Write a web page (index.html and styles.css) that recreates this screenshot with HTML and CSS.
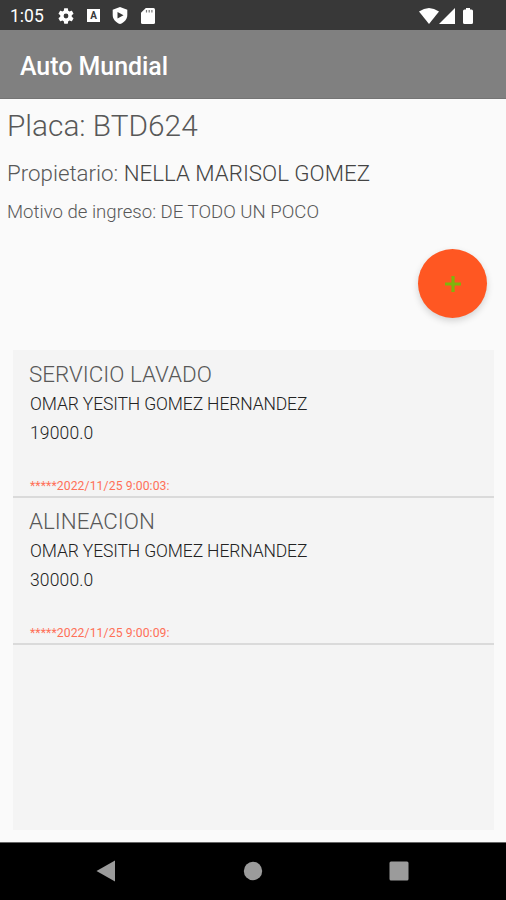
FILE: index.html
```html
<!DOCTYPE html>
<html lang="es">
<head>
    <meta charset="UTF-8">
    <meta name="viewport" content="width=device-width, initial-scale=1.0">
    <title>Auto Mundial</title>
    <link rel="stylesheet" href="styles.css">
</head>
<body>
    <div class="status-bar">
        <span class="clock">1:05</span>
        <svg class="icon-gear" viewBox="2 2 20 20" width="16" height="16"><path fill="#fff" d="M19.14 12.94c.04-.3.06-.61.06-.94 0-.32-.02-.64-.07-.94l2.03-1.58c.18-.14.23-.41.12-.61l-1.92-3.32c-.12-.22-.37-.29-.59-.22l-2.39.96c-.5-.38-1.03-.7-1.62-.94l-.36-2.54c-.04-.24-.24-.41-.48-.41h-3.84c-.24 0-.43.17-.47.41l-.36 2.54c-.59.24-1.13.57-1.62.94l-2.39-.96c-.22-.08-.47 0-.59.22L2.74 8.87c-.12.21-.08.47.12.61l2.03 1.58c-.05.3-.09.63-.09.94s.02.64.07.94l-2.03 1.58c-.18.14-.23.41-.12.61l1.92 3.32c.12.22.37.29.59.22l2.39-.96c.5.38 1.03.7 1.62.94l.36 2.54c.05.24.24.41.48.41h3.84c.24 0 .44-.17.47-.41l.36-2.54c.59-.24 1.13-.56 1.62-.94l2.39.96c.22.08.47 0 .59-.22l1.92-3.32c.12-.22.07-.47-.12-.61zM12 15a3 3 0 1 1 0-6 3 3 0 0 1 0 6z"/></svg>
        <span class="icon-keyboard">A</span>
        <svg class="icon-shield" viewBox="0 0 16 17" width="16" height="17"><path fill="#fff" d="M8 0l7.3 2.7v5.2c0 4.2-2.9 7.4-7.3 9.1-4.400-1.700-7.300-4.900-7.300-9.100V2.700z"/><path fill="#383838" d="M5.500 5.100l6 3.100-6 3.200z"/></svg>
        <svg class="icon-card" viewBox="0 0 14 16" width="14" height="16"><path fill="#fff" d="M4.800 0h7.700q1.500 0 1.500 1.500v13q0 1.500-1.500 1.500h-11Q0 16 0 14.500V4.800z"/><path stroke="#777" stroke-width="1.200" d="M5.500 2v2.500M8.200 2v2.500M10.900 2v2.500"/></svg>
        <svg class="icon-wifi" viewBox="0 0 20 16" width="20" height="16"><path fill="#fff" d="M0 3.600Q10-3.600 20 3.600L10 16z"/></svg>
        <svg class="icon-signal" viewBox="0 0 16 16" width="16" height="16"><path fill="#fff" d="M16 0v16H0z"/></svg>
        <svg class="icon-battery" viewBox="0 0 10 16" width="10" height="16"><path fill="#fff" d="M3 0h4v1.500h1.500Q10 1.500 10 3v11.500Q10 16 8.500 16h-7Q0 16 0 14.500V3q0-1.500 1.500-1.500H3z"/></svg>
    </div>

    <header class="app-bar">
        <h1>Auto Mundial</h1>
    </header>

    <main class="content">
        <div class="vehicle">
            <p class="plate">Placa: BTD624</p>
            <p class="owner">Propietario: <span>NELLA MARISOL GOMEZ</span></p>
            <p class="reason">Motivo de ingreso: DE TODO UN POCO</p>
        </div>

        <div class="actions">
            <button class="fab" aria-label="Agregar servicio">
                <svg viewBox="0 0 16 16" width="16" height="16"><path stroke="#7eb50c" stroke-width="3.200" d="M8 0v16M0 8h16"/></svg>
            </button>
        </div>

        <div class="services">
            <div class="service">
                <h2>SERVICIO LAVADO</h2>
                <p class="worker">OMAR YESITH GOMEZ HERNANDEZ</p>
                <p class="price">19000.0</p>
                <p class="date">*****2022/11/25 9:00:03:</p>
            </div>
            <div class="service">
                <h2>ALINEACION</h2>
                <p class="worker">OMAR YESITH GOMEZ HERNANDEZ</p>
                <p class="price">30000.0</p>
                <p class="date">*****2022/11/25 9:00:09:</p>
            </div>
        </div>
    </main>

    <nav class="nav-bar">
        <svg viewBox="0 0 20 22" width="20" height="22"><path fill="#9b9b9b" d="M19 .5v21L.5 11z"/></svg>
        <svg viewBox="0 0 20 20" width="20" height="20"><circle cx="10" cy="10" r="9.200" fill="#9b9b9b"/></svg>
        <svg viewBox="0 0 20 20" width="20" height="20"><rect x=".5" y=".5" width="19" height="19" rx="1.500" fill="#9b9b9b"/></svg>
    </nav>
</body>
</html>
```

FILE: styles.css
```css
* {
    box-sizing: border-box;
}

body {
    font-family: Roboto, sans-serif;
    background-color: #fafafa;
    margin: 0;
    height: 900px;
    display: flex;
    flex-direction: column;
    overflow: hidden;
}

h1, h2, p {
    margin: 0;
    font-weight: 300;
    white-space: nowrap;
}

.status-bar {
    height: 30px;
    flex: none;
    background-color: #383838;
    color: #fff;
    display: flex;
    align-items: center;
    padding: 1px 33px 0 10px;
}

.clock {
    width: 48px;
    font-size: 17.5px;
}

.icon-keyboard {
    width: 13px;
    height: 13px;
    margin-left: 13px;
    background-color: #fff;
    color: #383838;
    font-size: 10px;
    font-weight: 700;
    line-height: 13px;
    text-align: center;
}

.icon-shield {
    margin-left: 12px;
}

.icon-card {
    margin-left: 13px;
}

.icon-wifi {
    margin-left: auto;
}

.icon-battery {
    margin-left: 8px;
}

.app-bar {
    height: 69px;
    flex: none;
    background-color: #808080;
    display: flex;
    align-items: center;
    padding: 4px 20px 0;
    border-bottom: 1px solid #747474;
}

.app-bar h1 {
    color: #fff;
    font-size: 24.9px;
    font-weight: 500;
}

.content {
    flex: 1;
    padding: 7px 12px 12px 13px;
    display: flex;
    flex-direction: column;
}

.vehicle {
    margin-left: -6px;
    color: #585858;
}

.plate {
    font-size: 29.8px;
    line-height: 40px;
}

.owner {
    margin-top: 11px;
    font-size: 22.3px;
    line-height: 32px;
}

.owner span {
    color: #444;
}

.reason {
    margin-top: 10px;
    font-size: 18.6px;
    line-height: 26px;
}

.actions {
    display: flex;
    justify-content: flex-end;
    padding: 24px 7px 32px 0;
}

.fab {
    width: 69px;
    height: 69px;
    padding: 0;
    border: none;
    border-radius: 50%;
    background-color: #ff5722;
    box-shadow: 0 3px 7px rgba(0, 0, 0, 0.16);
    display: flex;
    justify-content: center;
    align-items: center;
}

.services {
    flex: 1;
    padding-top: 1px;
    background-color: #f4f4f4;
}

.service {
    height: 147px;
    padding: 9px 16px 0;
    border-bottom: 2px solid #dadada;
}

.service h2 {
    color: #585858;
    font-size: 22.4px;
    line-height: 28px;
}

.worker, .price {
    padding-left: 1px;
    color: #222;
    font-size: 17.5px;
    line-height: 29px;
}

.worker {
    margin-top: 2px;
    letter-spacing: -0.13px;
}

.price {
    letter-spacing: 0.15px;
}

.date {
    margin-top: 30px;
    padding-left: 1px;
    color: #ff7058;
    font-size: 12.2px;
    font-weight: 400;
    letter-spacing: 0.1px;
    line-height: 16px;
}

.nav-bar {
    height: 58px;
    flex: none;
    background-color: #000;
    border-top: 1px solid #666;
    display: flex;
    justify-content: space-between;
    align-items: center;
    padding: 0 97px 2px 96px;
}
```
